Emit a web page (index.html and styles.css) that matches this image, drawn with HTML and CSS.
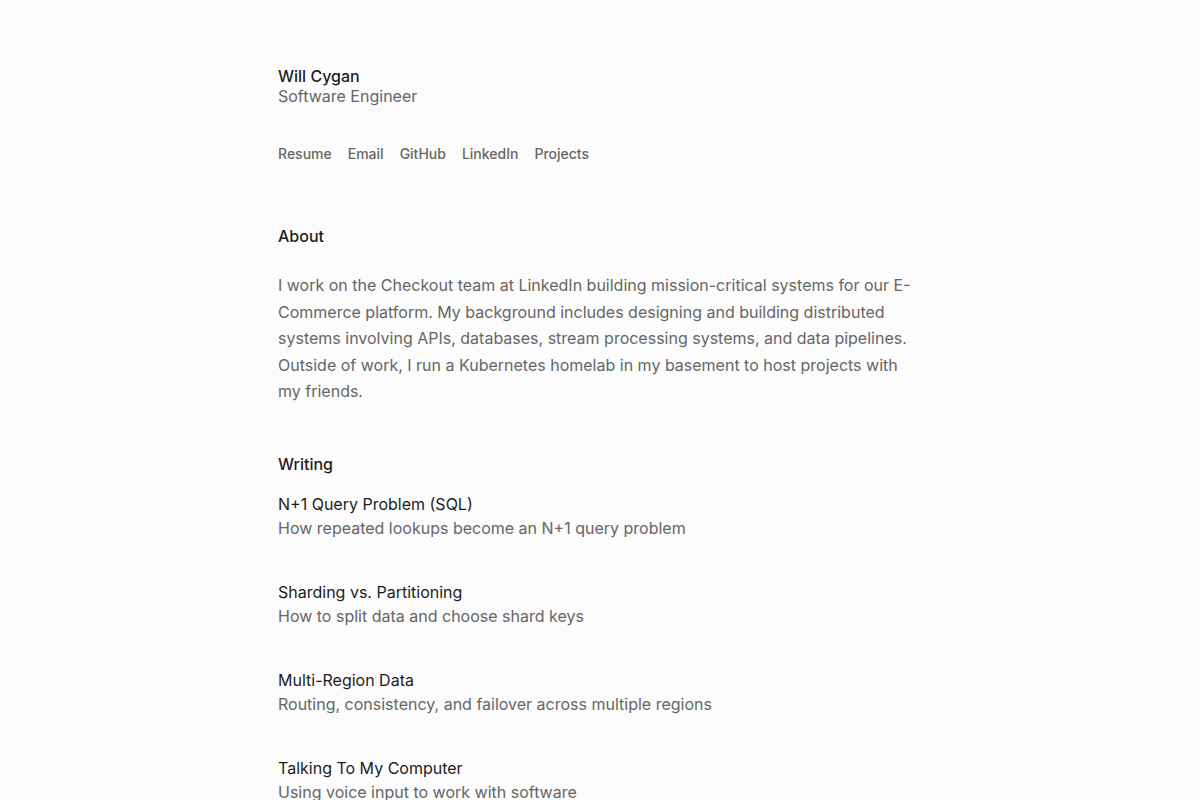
FILE: index.html
```html
<!DOCTYPE html>
<html lang="en">
<head>
  <meta charset="UTF-8">
  <meta name="viewport" content="width=device-width, initial-scale=1">
  <title>Will Cygan</title>
  <link rel="stylesheet" href="styles.css">
</head>
<body>
  <main class="page">
    <header class="intro">
      <div class="name">Will Cygan</div>
      <div class="role">Software Engineer</div>
    </header>

    <nav class="links">
      <a href="#">Resume</a>
      <a href="#">Email</a>
      <a href="#">GitHub</a>
      <a href="#">LinkedIn</a>
      <a href="#">Projects</a>
    </nav>

    <section class="about">
      <h2>About</h2>
      <p>I work on the Checkout team at LinkedIn building mission-critical systems for our E-Commerce platform. My background includes designing and building distributed systems involving APIs, databases, stream processing systems, and data pipelines. Outside of work, I run a Kubernetes homelab in my basement to host projects with my friends.</p>
    </section>

    <section class="writing">
      <h2>Writing</h2>
      <ul class="posts">
        <li>
          <a href="#" class="post-title">N+1 Query Problem (SQL)</a>
          <div class="post-desc">How repeated lookups become an N+1 query problem</div>
        </li>
        <li>
          <a href="#" class="post-title">Sharding vs. Partitioning</a>
          <div class="post-desc">How to split data and choose shard keys</div>
        </li>
        <li>
          <a href="#" class="post-title">Multi-Region Data</a>
          <div class="post-desc">Routing, consistency, and failover across multiple regions</div>
        </li>
        <li>
          <a href="#" class="post-title">Talking To My Computer</a>
          <div class="post-desc">Using voice input to work with software</div>
        </li>
      </ul>
    </section>
  </main>
</body>
</html>
```

FILE: styles.css
```css
:root {
  --bg: #fcfcfc;
  --text: #1c1c1c;
  --muted: #666666;
}

body {
  margin: 0;
  font-family: Inter, 'Noto Sans', sans-serif;
  background-color: var(--bg);
  color: var(--text);
}

a {
  color: inherit;
  text-decoration: none;
}

.page {
  width: 644px;
  margin: 0 auto;
  padding-top: 66px;
}

.intro {
  font-size: 16px;
  line-height: 20px;
}

.name {
  font-weight: 500;
}

.role {
  color: var(--muted);
}

.links {
  display: flex;
  gap: 16px;
  margin-top: 38px;
  font-size: 14px;
  font-weight: 500;
  line-height: 20px;
  color: var(--muted);
}

h2 {
  font-size: 16px;
  font-weight: 500;
  line-height: 20px;
  margin: 0;
}

.about {
  margin-top: 62px;
}

.about p {
  margin: 26px 0 0;
  font-size: 16px;
  line-height: 26.5px;
  color: var(--muted);
}

.writing {
  margin-top: 49px;
}

.posts {
  list-style: none;
  margin: 18px 0 0;
  padding: 0;
}

.posts li {
  font-size: 16px;
  line-height: 24px;
  margin-bottom: 40px;
}

.post-title {
  display: block;
}

.post-desc {
  color: var(--muted);
}
```
